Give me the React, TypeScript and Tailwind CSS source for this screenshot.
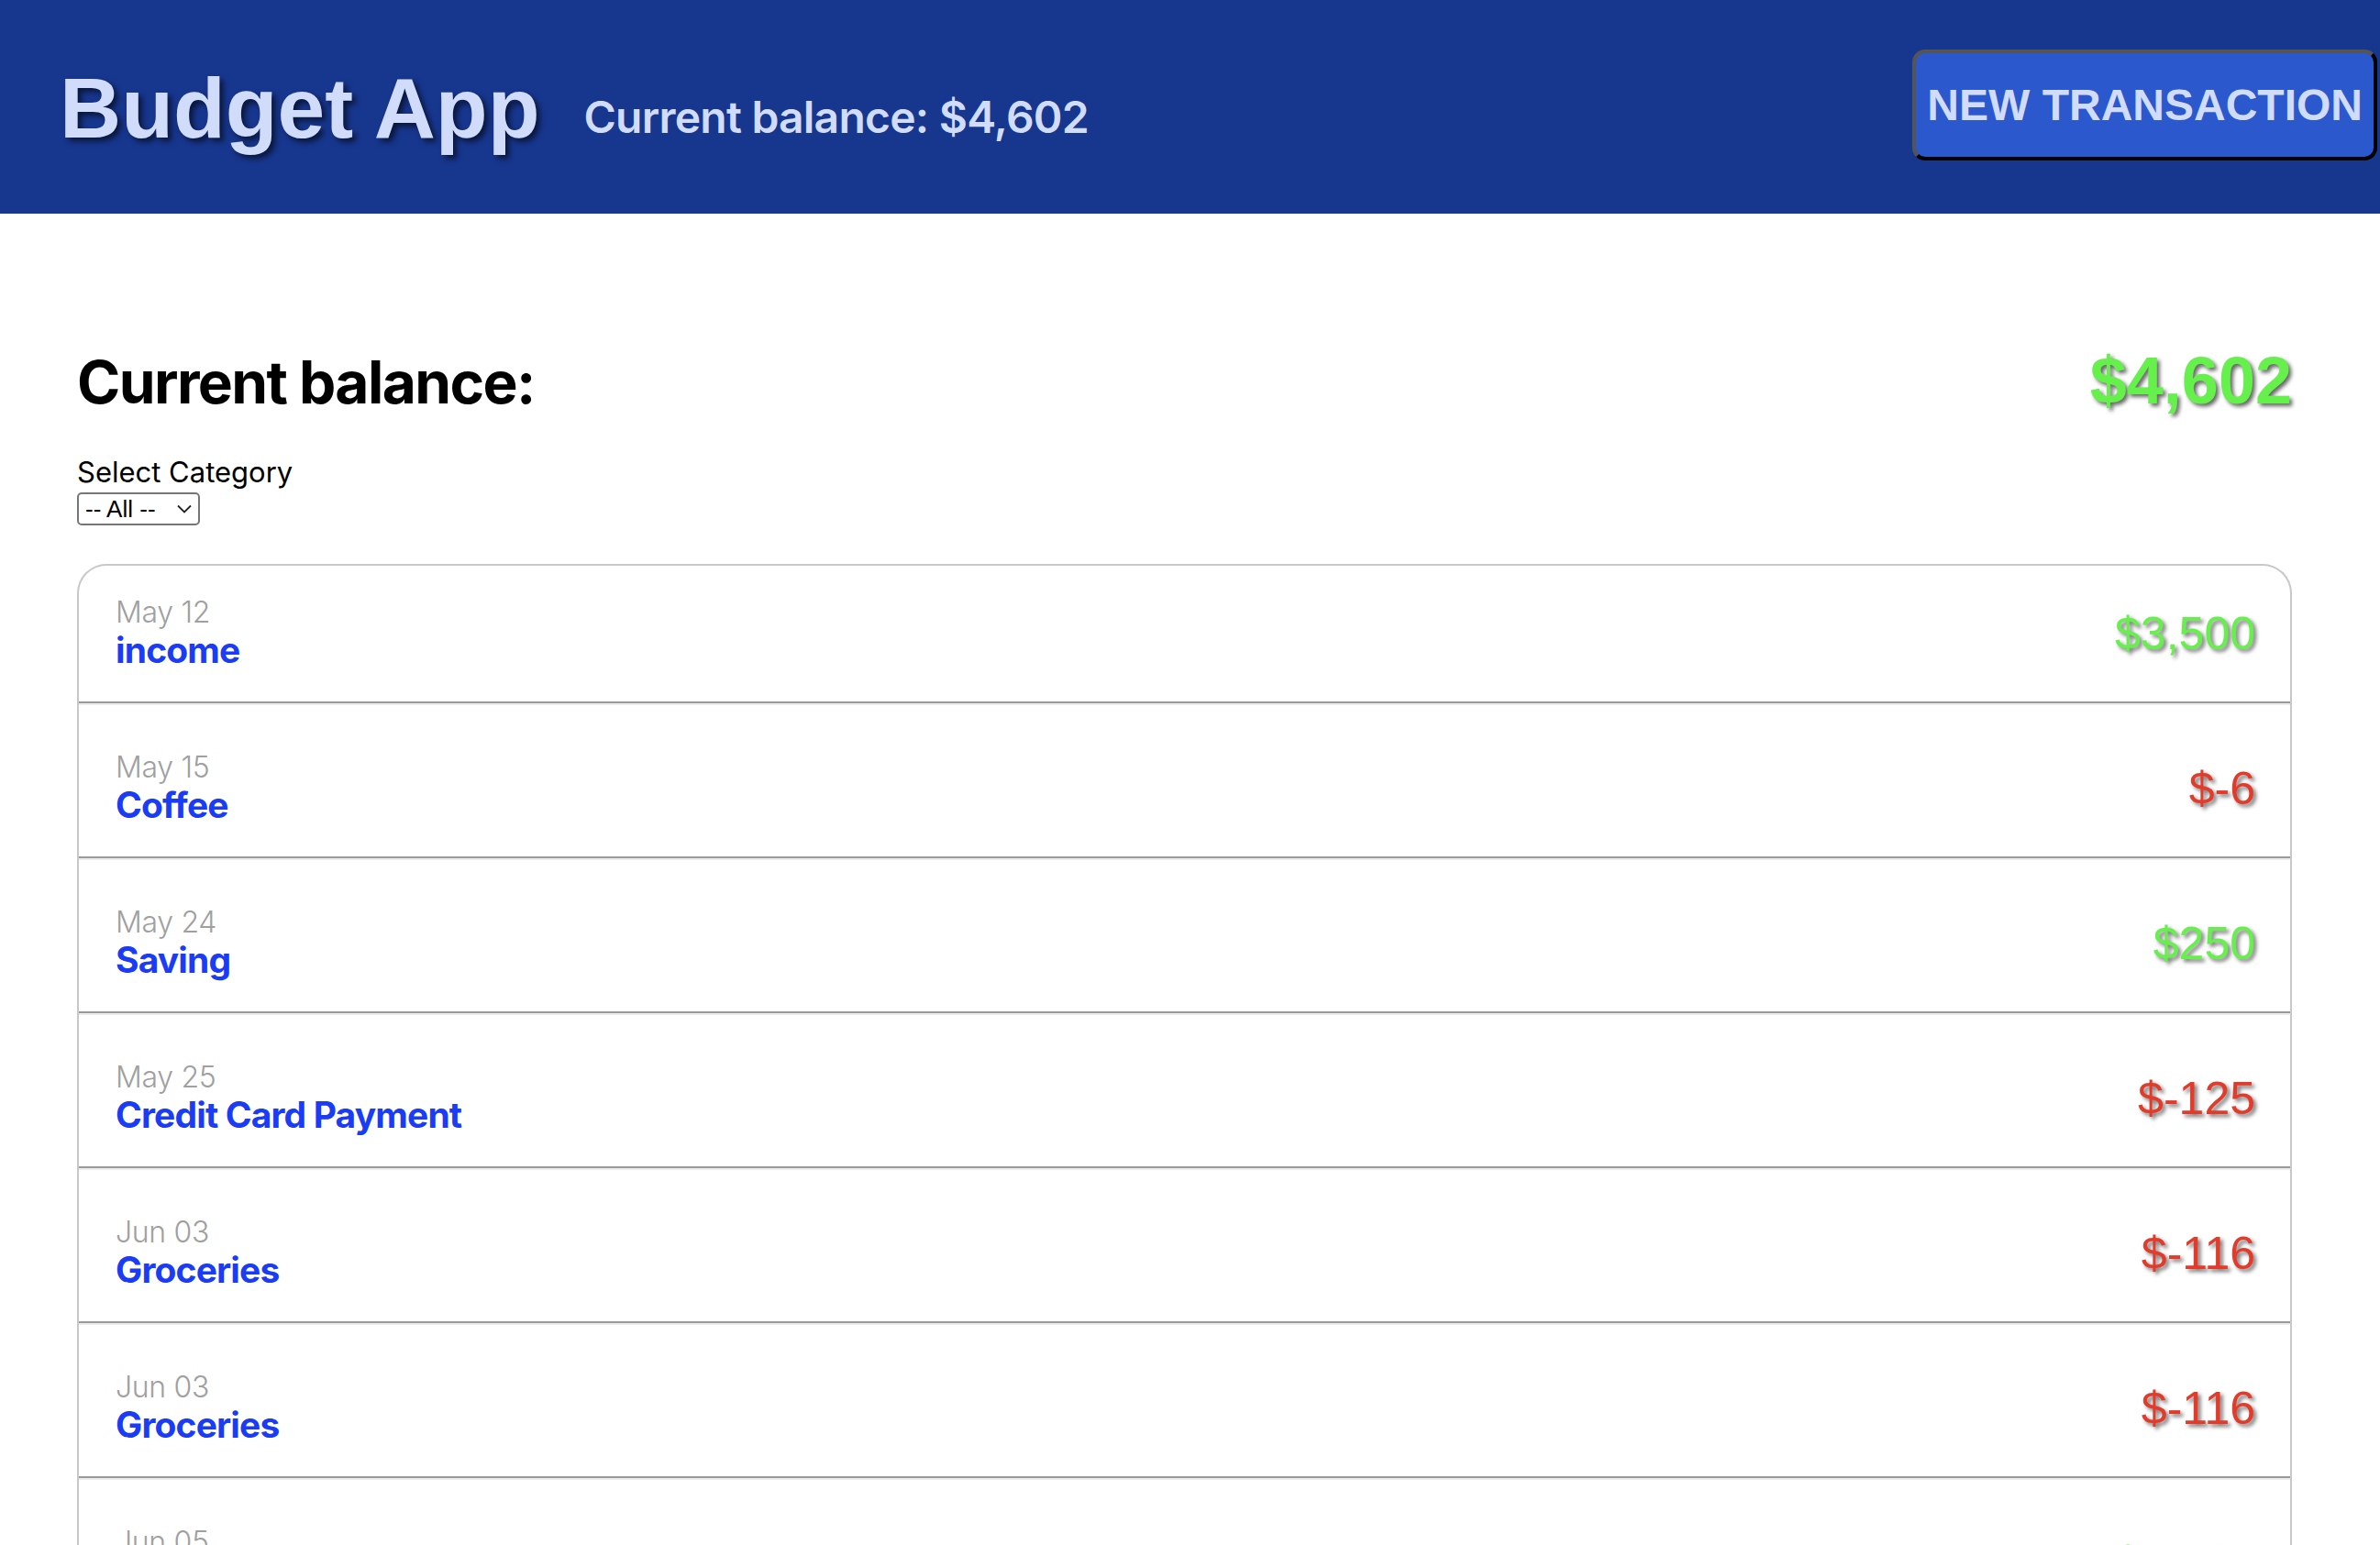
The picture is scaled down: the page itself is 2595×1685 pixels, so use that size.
import React from "react";

type Tx = { date: string; title: string; amount: string; positive: boolean };

const txs: Tx[] = [
  { date: "May 12", title: "income", amount: "$3,500", positive: true },
  { date: "May 15", title: "Coffee", amount: "$-6", positive: false },
  { date: "May 24", title: "Saving", amount: "$250", positive: true },
  { date: "May 25", title: "Credit Card Payment", amount: "$-125", positive: false },
  { date: "Jun 03", title: "Groceries", amount: "$-116", positive: false },
  { date: "Jun 03", title: "Groceries", amount: "$-116", positive: false },
  { date: "Jun 05", title: "Paycheck", amount: "$1,000", positive: true },
  { date: "Jun 08", title: "Dinner", amount: "$-35", positive: false },
  { date: "Jun 10", title: "Gift", amount: "$250", positive: true },
];

function Row({ tx, first }: { tx: Tx; first: boolean }) {
  return (
    <li
      className={
        first
          ? "flex items-center justify-between border-b-2 border-[#9a9a9a] pb-[32px] pl-[40px] pr-[38px] pt-[33px]"
          : "flex items-center justify-between border-b-2 border-t-2 border-b-[#9a9a9a] border-t-[#ececec] pb-[32px] pl-[40px] pr-[38px] pt-[50px]"
      }
    >
      <div className="flex flex-col">
        <span className="font-['Inter'] text-[32px] font-light leading-[35px] tracking-[-0.01em] text-[#a0a0a0]">
          {tx.date}
        </span>
        <span className="font-['Inter'] text-[39px] font-bold leading-[48px] tracking-[-0.022em] text-[#1a3cf5]">
          {tx.title}
        </span>
      </div>
      <span
        className={
          tx.positive
            ? "font-['Liberation_Sans'] text-[50px] text-[#66f04b] [text-shadow:3px_3px_4px_rgba(0,0,0,0.55)]"
            : "font-['Liberation_Sans'] text-[50px] text-[#e43a2a] [text-shadow:3px_3px_4px_rgba(0,0,0,0.55)]"
        }
      >
        {tx.amount}
      </span>
    </li>
  );
}

export default function App() {
  return (
    <div className="min-h-screen bg-white">
      <header className="flex h-[233px] items-start justify-between bg-[#17368e] pr-[3px]">
        <div className="flex items-start">
          <h1 className="ml-[65px] mt-[64px] font-['Liberation_Sans'] text-[93px] font-bold leading-[108px] text-[#d0dcfa] [text-shadow:4px_4px_6px_rgba(0,0,0,0.6)]">
            Budget App
          </h1>
          <h2 className="ml-[48px] mt-[99px] font-['Inter'] text-[48px] font-semibold leading-[58px] tracking-[-0.016em] text-[#d0dcfa]">
            Current balance: $4,602
          </h2>
        </div>
        <button className="mt-[54px] flex h-[121px] items-center justify-center rounded-[14px] border-4 border-b-black border-l-[#555555] border-r-black border-t-[#555555] bg-[#2b58cc] px-[12px] font-['Liberation_Sans'] text-[48px] font-bold leading-[55px] text-[#d0dcfa]">
          NEW TRANSACTION
        </button>
      </header>

      <main className="pl-[84px] pr-[96px]">
        <div className="flex items-baseline justify-between pt-[143px]">
          <h2 className="font-['Inter'] text-[64px] font-bold leading-[78px] tracking-[-0.025em] text-black">
            Current balance:
          </h2>
          <span className="font-['Liberation_Sans'] text-[72px] font-bold leading-[78px] text-[#66f04b] [text-shadow:3px_3px_4px_rgba(0,0,0,0.6)]">
            $4,602
          </span>
        </div>

        <div className="mt-[41px] flex flex-col items-start">
          <label className="font-['Inter'] text-[31px] leading-[36px] text-black">Select Category</label>
          <div className="relative mt-[4px]">
            <select className="h-[36px] w-[134px] appearance-none rounded-[5px] border-2 border-[#767676] bg-white pl-[7px] font-['Liberation_Sans'] text-[26px] leading-[30px] text-black outline-none">
              <option>-- All --</option>
            </select>
            <svg
              className="pointer-events-none absolute left-[109px] top-[13px]"
              width="16"
              height="10"
              viewBox="0 0 16 10"
              fill="none"
            >
              <path d="M1 1.5 L8 8.5 L15 1.5" stroke="#222" strokeWidth="1.8" />
            </svg>
          </div>
        </div>

        <ul className="mt-[42px] rounded-t-[32px] border-2 border-b-0 border-[#c8c8c8]">
          {txs.map((tx, i) => (
            <Row key={i} tx={tx} first={i === 0} />
          ))}
        </ul>
      </main>
    </div>
  );
}
